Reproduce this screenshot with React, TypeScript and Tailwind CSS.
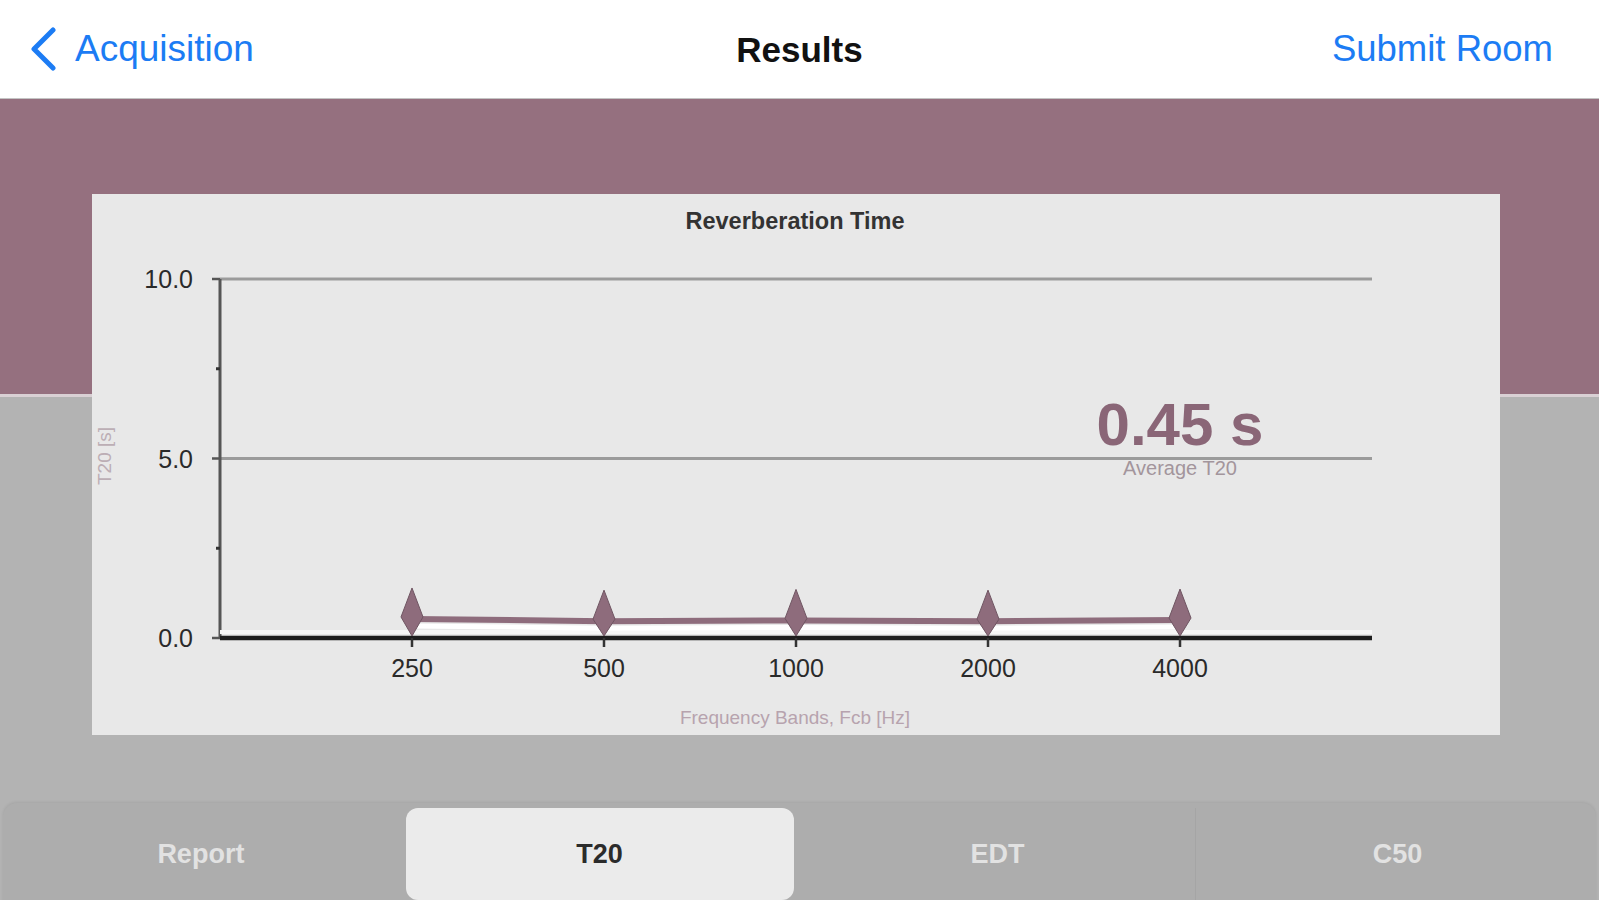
import React from "react";

// Chart geometry (card-local px)
const PLOT_X0 = 128;
const PLOT_X1 = 1280;
const Y_TOP = 85;
const Y_ZERO = 444;
const STEP = 192;

const bands = ["250", "500", "1000", "2000", "4000"];
const values = [0.53, 0.47, 0.49, 0.47, 0.5];

const yFor = (v: number) => Y_ZERO - (v / 10) * (Y_ZERO - Y_TOP);

function ReverbChart() {
  const pts = values.map((v, i) => ({ x: PLOT_X0 + STEP * (i + 1), y: yFor(v) }));
  const line = pts.map((p) => `${p.x},${p.y}`).join(" ");

  return (
    <svg width="1408" height="541" viewBox="0 0 1408 541" className="block">
      {/* title */}
      <text x="703" y="35" textAnchor="middle" fontSize="23.5" fontWeight="700" fill="#333" fontFamily="'Liberation Sans', Arial, sans-serif">
        Reverberation Time
      </text>

      {/* grid lines */}
      <line x1={PLOT_X0} y1={Y_TOP} x2={PLOT_X1} y2={Y_TOP} stroke="#9b9b9b" strokeWidth="3" />
      <line x1={PLOT_X0} y1={yFor(5)} x2={PLOT_X1} y2={yFor(5)} stroke="#9b9b9b" strokeWidth="3" />

      {/* y axis */}
      <line x1={PLOT_X0} y1={Y_TOP} x2={PLOT_X0} y2={Y_ZERO} stroke="#555" strokeWidth="3" />
      {[10, 5, 0].map((v) => (
        <line key={v} x1={PLOT_X0 - 8} y1={yFor(v)} x2={PLOT_X0} y2={yFor(v)} stroke="#555" strokeWidth="2.5" />
      ))}
      {[7.5, 2.5].map((v) => (
        <line key={v} x1={PLOT_X0 - 4} y1={yFor(v)} x2={PLOT_X0} y2={yFor(v)} stroke="#333" strokeWidth="3" />
      ))}

      {/* y labels */}
      <g fontFamily="'Liberation Sans', Arial, sans-serif" fontSize="25" fill="#2a2a2a" textAnchor="end">
        <text x="101" y={Y_TOP + 9}>10.0</text>
        <text x="101" y={yFor(5) + 9}>5.0</text>
        <text x="101" y={Y_ZERO + 9}>0.0</text>
      </g>

      {/* y axis title */}
      <text
        x="0"
        y="0"
        transform="translate(19 262) rotate(-90)"
        textAnchor="middle"
        fontSize="19"
        fill="#bcaeb5"
        fontFamily="'Liberation Sans', Arial, sans-serif"
      >
        T20 [s]
      </text>

      {/* highlight + x axis */}
      <line x1={PLOT_X0} y1={Y_ZERO - 6} x2={PLOT_X1} y2={Y_ZERO - 6} stroke="#f7f7f7" strokeWidth="4" />
      <line x1={PLOT_X0} y1={Y_ZERO} x2={PLOT_X1} y2={Y_ZERO} stroke="#1e1e1e" strokeWidth="4.5" />

      {/* average */}
      <text x="1088" y="251" textAnchor="middle" fontSize="60" fontWeight="700" fill="#8a6677" fontFamily="'Liberation Sans', Arial, sans-serif">
        0.45 s
      </text>
      <text x="1088" y="281" textAnchor="middle" fontSize="20" fill="#a3959c" fontFamily="'Liberation Sans', Arial, sans-serif">
        Average T20
      </text>

      {/* data line */}
      <polyline points={pts.map((p) => `${p.x},${p.y + 7}`).join(" ")} fill="none" stroke="#ffffff" strokeWidth="5" />
      <polyline points={line} fill="none" stroke="#8e6c7c" strokeWidth="6" />

      {/* markers + x ticks + labels */}
      {pts.map((p, i) => (
        <g key={bands[i]}>
          <line x1={p.x} y1={Y_ZERO} x2={p.x} y2={Y_ZERO + 9} stroke="#333" strokeWidth="2.5" />
          <polygon
            points={`${p.x},${p.y - 31} ${p.x + 11},${p.y - 2} ${p.x},${Y_ZERO - 2} ${p.x - 11},${p.y - 2}`}
            fill="#8e6c7c"
            stroke="#6f5562"
            strokeWidth="1"
          />
          <text
            x={p.x}
            y="483"
            textAnchor="middle"
            fontSize="25"
            fill="#2a2a2a"
            fontFamily="'Liberation Sans', Arial, sans-serif"
          >
            {bands[i]}
          </text>
        </g>
      ))}

      {/* x axis title */}
      <text x="703" y="530" textAnchor="middle" fontSize="19" fill="#b7a3ae" fontFamily="'Liberation Sans', Arial, sans-serif">
        Frequency Bands, Fcb [Hz]
      </text>
    </svg>
  );
}

const tabs = ["Report", "T20", "EDT", "C50"];

export default function App() {
  const active = "T20";

  return (
    <div className="w-[1599px] h-[900px] overflow-hidden flex flex-col bg-[#b3b3b3] font-['Liberation_Sans',Arial,sans-serif]">
      {/* Navigation bar */}
      <header className="h-[99px] shrink-0 bg-white border-b border-[#c4c4c4] grid grid-cols-3 items-center">
        <button className="flex items-center gap-[18px] pl-[29px] text-[#1c7cf4] text-[37px] leading-none">
          <svg width="28" height="44" viewBox="0 0 28 44" fill="none">
            <path d="M24 3 L5 22 L24 41" stroke="#1c7cf4" strokeWidth="5" strokeLinecap="round" strokeLinejoin="round" />
          </svg>
          <span className="-mt-[2px]">Acquisition</span>
        </button>
        <h1 className="text-center text-[35px] font-bold text-[#111] leading-none">Results</h1>
        <button className="justify-self-end pr-[46px] text-[36.5px] text-[#1c7cf4] leading-none">Submit Room</button>
      </header>

      {/* Content */}
      <main className="flex-1 flex flex-col bg-[linear-gradient(to_bottom,#95707f_295px,#d9d0d4_295px,#d9d0d4_298px,#b3b3b3_298px)]">
        <section className="mt-[95px] ml-[92px] mr-[99px] h-[541px] bg-[#e8e8e8]">
          <ReverbChart />
        </section>

        {/* Segmented control */}
        <nav className="mt-[68px] mx-[3px] h-[120px] rounded-[14px] bg-[#adadad] shadow-[0_-1px_3px_rgba(0,0,0,0.08)] p-[5px] grid grid-cols-4">
          {tabs.map((t, i) => (
            <div
              key={t}
              className={
                t === active
                  ? "h-[92px] rounded-[12px] bg-[#ebebeb] flex items-center justify-center text-[27px] font-semibold text-[#2b2b2b] ml-[2px] mr-[6px]"
                  : i === 3
                  ? "h-[92px] flex items-center justify-center text-[27px] font-semibold text-[#e2e2e2] border-l border-[#a5a5a5] pl-[8px]"
                  : i === 0
                  ? "h-[92px] flex items-center justify-center text-[27px] font-semibold text-[#e2e2e2] pr-[10px]"
                  : "h-[92px] flex items-center justify-center text-[27px] font-semibold text-[#e2e2e2]"
              }
            >
              {t}
            </div>
          ))}
        </nav>
      </main>
    </div>
  );
}
